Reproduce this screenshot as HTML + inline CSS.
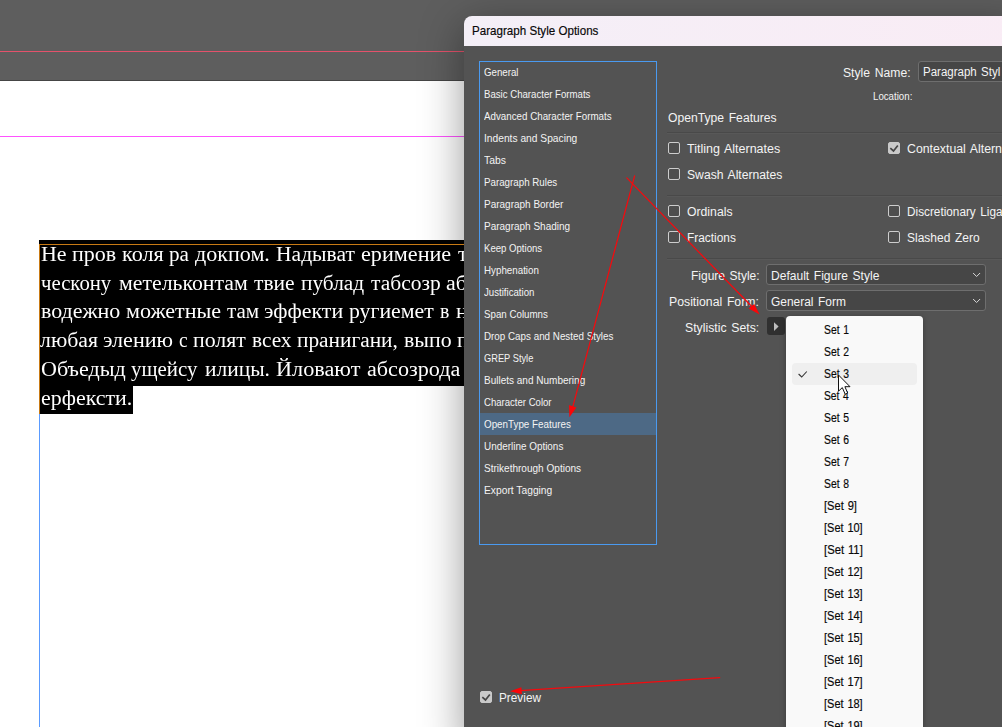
<!DOCTYPE html>
<html lang="en">
<head>
<meta charset="utf-8">
<title>Paragraph Style Options</title>
<style>
*{box-sizing:border-box;margin:0;padding:0}
html,body{width:1002px;height:727px;overflow:hidden;background:#5e5e5e;font-family:"Liberation Sans",sans-serif;}
#root{position:relative;width:1002px;height:727px;overflow:hidden;background:#5e5e5e}
.abs{position:absolute}
/* ---- app background ---- */
#redline{left:0;top:51px;width:1002px;height:1px;background:#e4526b}
#pgedge{left:0;top:80px;width:1002px;height:1px;background:#454545}
#canvas{left:0;top:81px;width:1002px;height:646px;background:#fff}
#magenta{left:0;top:136px;width:1002px;height:1px;background:#ff52ff}
#blueline{left:39px;top:414px;width:1px;height:313px;background:#5a9bff}
/* ---- text frame ---- */
#blk1{left:39px;top:240px;width:500px;height:146px;background:#000}
#blk2{left:39px;top:386px;width:94px;height:28px;background:#000}
.w{position:absolute;font-family:"Liberation Serif",serif;font-size:21.3px;line-height:normal;color:#fff;white-space:nowrap;transform-origin:0 0}
#tfc{left:39px;top:240px;width:425px;height:174px;overflow:hidden;will-change:transform}
#tfi{left:-39px;top:-240px;width:1002px;height:727px}
#tfw{left:0;top:0;width:1002px;height:727px}
#orangeT{left:39px;top:244px;width:500px;height:1px;background:#c87a14}
#orangeL{left:39px;top:244px;width:1px;height:170px;background:#c87a14}
/* ---- dialog ---- */
#dlg{left:464px;top:16px;width:560px;height:730px;background:#535353;border-radius:8px 0 0 0;box-shadow:0 10px 44px rgba(0,0,0,.40)}
#title{left:0;top:0;width:560px;height:30px;background:linear-gradient(90deg,#f4eff7 0%,#f9ecf5 100%);border-radius:8px 0 0 0}
#list{left:15px;top:45px;width:178px;height:484px;border:1px solid #4a9af0;background:#535353}
#sel{left:0;top:351px;width:176px;height:22px;background:#4d6985}
.sep{height:2px;background:linear-gradient(#494949 0,#494949 50%,#585858 50%,#585858 100%);left:203px;width:400px}
.cb{width:12px;height:12px;border:1px solid #cdcdcd;border-radius:2px;background:#4e4e4e}
.cb.on{background:#c9c9c9;border-color:#c9c9c9}
.dd{left:302px;width:220px;height:21px;border:1px solid #6e6e6e;border-radius:3px;background:#464646}
#ssbtn{left:303px;top:301px;width:18px;height:18px;border-radius:3px;background:#303030}
/* ---- popup ---- */
#menu{left:786px;top:316px;width:137px;height:430px;background:#f9f9f9;border-radius:4px 4px 0 0;box-shadow:0 1px 6px rgba(0,0,0,.28)}
#hl{left:792px;top:363px;width:125px;height:22px;background:#efefef;border-radius:4px}
/* ---- labels ---- */
.t{position:absolute;white-space:nowrap;line-height:normal;color:#f4f4f4;transform-origin:0 0}
.t.d{color:#080808;-webkit-text-stroke:0.18px #080808}
svg{position:absolute;left:0;top:0;overflow:visible}
</style>
</head>
<body>
<div id="root">
  <div class="abs" id="redline"></div>
  <div class="abs" id="pgedge"></div>
  <div class="abs" id="canvas"></div>
  <div class="abs" id="magenta"></div>
  <div class="abs" id="blueline"></div>

  <div class="abs" id="dlg">
    <div class="abs" id="title"></div>
    <div class="abs" id="list"><div class="abs" id="sel"></div></div>
    <!-- style name input -->
    <div class="abs dd" style="left:454px;top:45px;width:120px;height:21px"></div>
    <div class="abs sep" style="top:116px"></div>
    <div class="abs cb" style="left:204px;top:126px"></div>
    <div class="abs cb" style="left:204px;top:152px"></div>
    <div class="abs cb on" style="left:424px;top:126px"></div>
    <div class="abs sep" style="top:179px"></div>
    <div class="abs cb" style="left:204px;top:189px"></div>
    <div class="abs cb" style="left:204px;top:215px"></div>
    <div class="abs cb" style="left:424px;top:189px"></div>
    <div class="abs cb" style="left:424px;top:215px"></div>
    <div class="abs sep" style="top:242px"></div>
    <div class="abs dd" style="top:248px"></div>
    <div class="abs dd" style="top:274px"></div>
    <div class="abs" id="ssbtn"></div>
    <div class="abs cb on" style="left:16px;top:675px"></div>
  </div>
  <div class="abs" id="menu"></div>
  <div class="abs" id="hl"></div>
  <span class="t d" style="left:472.47px;top:23.9px;font-size:12.6px;transform:scaleX(0.9212)">Paragraph Style Options</span>
  <span class="t " style="left:483.61px;top:66.2px;font-size:11.4px;transform:scaleX(0.8521)">General</span>
  <span class="t " style="left:483.91px;top:88.2px;font-size:11.4px;transform:scaleX(0.8446)">Basic Character Formats</span>
  <span class="t " style="left:483.88px;top:110.2px;font-size:11.4px;transform:scaleX(0.8581)">Advanced Character Formats</span>
  <span class="t " style="left:484.12px;top:132.2px;font-size:11.4px;transform:scaleX(0.8984)">Indents and Spacing</span>
  <span class="t " style="left:483.72px;top:154.2px;font-size:11.4px;transform:scaleX(0.9142)">Tabs</span>
  <span class="t " style="left:484.3px;top:176.2px;font-size:11.4px;transform:scaleX(0.8567)">Paragraph Rules</span>
  <span class="t " style="left:484.29px;top:198.2px;font-size:11.4px;transform:scaleX(0.8763)">Paragraph Border</span>
  <span class="t " style="left:484.29px;top:220.2px;font-size:11.4px;transform:scaleX(0.8773)">Paragraph Shading</span>
  <span class="t " style="left:484.12px;top:242.2px;font-size:11.4px;transform:scaleX(0.8423)">Keep Options</span>
  <span class="t " style="left:484.1px;top:264.2px;font-size:11.4px;transform:scaleX(0.8583)">Hyphenation</span>
  <span class="t " style="left:483.84px;top:286.2px;font-size:11.4px;transform:scaleX(0.8463)">Justification</span>
  <span class="t " style="left:483.52px;top:308.2px;font-size:11.4px;transform:scaleX(0.8547)">Span Columns</span>
  <span class="t " style="left:484.1px;top:330.2px;font-size:11.4px;transform:scaleX(0.8623)">Drop Caps and Nested Styles</span>
  <span class="t " style="left:483.63px;top:352.2px;font-size:11.4px;transform:scaleX(0.8145)">GREP Style</span>
  <span class="t " style="left:483.89px;top:374.2px;font-size:11.4px;transform:scaleX(0.8782)">Bullets and Numbering</span>
  <span class="t " style="left:483.62px;top:396.2px;font-size:11.4px;transform:scaleX(0.8397)">Character Color</span>
  <span class="t " style="left:483.64px;top:418.2px;font-size:11.4px;transform:scaleX(0.8624)">OpenType Features</span>
  <span class="t " style="left:484.13px;top:440.2px;font-size:11.4px;transform:scaleX(0.8702)">Underline Options</span>
  <span class="t " style="left:484.49px;top:462.2px;font-size:11.4px;transform:scaleX(0.8812)">Strikethrough Options</span>
  <span class="t " style="left:484.07px;top:484.2px;font-size:11.4px;transform:scaleX(0.9011)">Export Tagging</span>
  <span class="t " style="left:843.05px;top:66.1px;font-size:12.5px;word-spacing:1.3px;transform:scaleX(0.9734)">Style Name:</span>
  <span class="t " style="left:923.47px;top:65.0px;font-size:12.5px;word-spacing:1.3px;transform:scaleX(0.9193)">Paragraph Styl</span>
  <span class="t " style="left:873.3px;top:90.1px;font-size:10.6px;transform:scaleX(0.9147)">Location:</span>
  <span class="t " style="left:667.84px;top:110.8px;font-size:12.5px;word-spacing:1.3px;transform:scaleX(0.972)">OpenType Features</span>
  <span class="t " style="left:687.01px;top:141.6px;font-size:12.5px;word-spacing:1.3px;transform:scaleX(1.0)">Titling Alternates</span>
  <span class="t " style="left:686.75px;top:167.5px;font-size:12.5px;word-spacing:1.3px;transform:scaleX(0.9738)">Swash Alternates</span>
  <span class="t " style="left:686.93px;top:204.6px;font-size:12.5px;word-spacing:1.3px;transform:scaleX(0.9776)">Ordinals</span>
  <span class="t " style="left:687.13px;top:230.8px;font-size:12.5px;word-spacing:1.3px;transform:scaleX(0.9504)">Fractions</span>
  <span class="t " style="left:906.9px;top:141.5px;font-size:12.5px;word-spacing:1.3px;transform:scaleX(0.984)">Contextual Altern</span>
  <span class="t " style="left:906.94px;top:204.8px;font-size:12.5px;word-spacing:1.3px;transform:scaleX(0.9428)">Discretionary Ligatures</span>
  <span class="t " style="left:906.56px;top:230.5px;font-size:12.5px;word-spacing:1.3px;transform:scaleX(0.9592)">Slashed Zero</span>
  <span class="t " style="left:691.22px;top:268.8px;font-size:12.5px;word-spacing:1.3px;transform:scaleX(0.9604)">Figure Style:</span>
  <span class="t " style="left:669.3px;top:294.6px;font-size:12.5px;word-spacing:1.3px;transform:scaleX(0.9814)">Positional Form:</span>
  <span class="t " style="left:684.64px;top:320.6px;font-size:12.5px;word-spacing:1.3px;transform:scaleX(0.9809)">Stylistic Sets:</span>
  <span class="t " style="left:771.12px;top:269.0px;font-size:12.5px;word-spacing:1.3px;transform:scaleX(0.9642)">Default Figure Style</span>
  <span class="t " style="left:770.92px;top:294.8px;font-size:12.5px;word-spacing:1.3px;transform:scaleX(0.9546)">General Form</span>
  <span class="t " style="left:499.34px;top:690.8px;font-size:12.5px;word-spacing:1.3px;transform:scaleX(0.9437)">Preview</span>
  <span class="t d" style="left:823.85px;top:322.0px;font-size:12.8px;word-spacing:0.9px;transform:scaleX(0.8105)">Set 1</span>
  <span class="t d" style="left:823.85px;top:344.0px;font-size:12.8px;word-spacing:0.9px;transform:scaleX(0.811)">Set 2</span>
  <span class="t d" style="left:823.85px;top:366.0px;font-size:12.8px;word-spacing:0.9px;transform:scaleX(0.8104)">Set 3</span>
  <span class="t d" style="left:823.86px;top:388.0px;font-size:12.8px;word-spacing:0.9px;transform:scaleX(0.8043)">Set 4</span>
  <span class="t d" style="left:823.85px;top:410.0px;font-size:12.8px;word-spacing:0.9px;transform:scaleX(0.8104)">Set 5</span>
  <span class="t d" style="left:823.85px;top:432.0px;font-size:12.8px;word-spacing:0.9px;transform:scaleX(0.811)">Set 6</span>
  <span class="t d" style="left:823.85px;top:454.0px;font-size:12.8px;word-spacing:0.9px;transform:scaleX(0.811)">Set 7</span>
  <span class="t d" style="left:823.86px;top:476.0px;font-size:12.8px;word-spacing:0.9px;transform:scaleX(0.8102)">Set 8</span>
  <span class="t d" style="left:823.91px;top:498.0px;font-size:12.8px;word-spacing:0.9px;transform:scaleX(0.8689)">[Set 9]</span>
  <span class="t d" style="left:823.92px;top:520.0px;font-size:12.8px;word-spacing:0.9px;transform:scaleX(0.8593)">[Set 10]</span>
  <span class="t d" style="left:823.9px;top:542.0px;font-size:12.8px;word-spacing:0.9px;transform:scaleX(0.8796)">[Set 11]</span>
  <span class="t d" style="left:823.92px;top:564.0px;font-size:12.8px;word-spacing:0.9px;transform:scaleX(0.8593)">[Set 12]</span>
  <span class="t d" style="left:823.92px;top:586.0px;font-size:12.8px;word-spacing:0.9px;transform:scaleX(0.8593)">[Set 13]</span>
  <span class="t d" style="left:823.92px;top:608.0px;font-size:12.8px;word-spacing:0.9px;transform:scaleX(0.8593)">[Set 14]</span>
  <span class="t d" style="left:823.92px;top:630.0px;font-size:12.8px;word-spacing:0.9px;transform:scaleX(0.8593)">[Set 15]</span>
  <span class="t d" style="left:823.92px;top:652.0px;font-size:12.8px;word-spacing:0.9px;transform:scaleX(0.8593)">[Set 16]</span>
  <span class="t d" style="left:823.92px;top:674.0px;font-size:12.8px;word-spacing:0.9px;transform:scaleX(0.8593)">[Set 17]</span>
  <span class="t d" style="left:823.92px;top:696.0px;font-size:12.8px;word-spacing:0.9px;transform:scaleX(0.8593)">[Set 18]</span>
  <span class="t d" style="left:823.92px;top:718.0px;font-size:12.8px;word-spacing:0.9px;transform:scaleX(0.8593)">[Set 19]</span>
  <svg width="1002" height="727" viewBox="0 0 1002 727">
    <!-- checkbox ticks -->
    <path d="M890.3 148.1 L893.5 151 L897.8 145.5" fill="none" stroke="#454545" stroke-width="1.7"/>
    <path d="M482.3 697.1 L485.5 700 L489.8 694.5" fill="none" stroke="#454545" stroke-width="1.7"/>
    <!-- dropdown chevrons -->
    <path d="M973.1 273 L976.6 276.5 L980.1 273" fill="none" stroke="#dadada" stroke-width="1"/>
    <path d="M973.1 299 L976.6 302.5 L980.1 299" fill="none" stroke="#dadada" stroke-width="1"/>
    <!-- stylistic sets button triangle -->
    <path d="M774 322.2 L778.6 326.5 L774 330.9 Z" fill="#bdbdbd"/>
    <!-- menu check -->
    <path d="M798.6 374 L801.7 377 L806.8 371.5" fill="none" stroke="#333" stroke-width="1.1"/>
    <!-- red annotation arrows -->
    <g stroke="#f50a0e" stroke-width="1.25" fill="none" stroke-linecap="round">
      <line x1="626.8" y1="177.9" x2="751.5" y2="306.3"/>
      <line x1="634.6" y1="175.8" x2="572.9" y2="406.4"/>
      <line x1="719.7" y1="677.6" x2="520" y2="690.7"/>
    </g>
    <g fill="#fa0508">
      <path d="M759.6 314.5 L748.6 308.5 L754.2 304 Z"/>
      <path d="M569.4 417.3 L569 405.1 L576.4 407.4 Z"/>
      <path d="M509.9 691.3 L521.4 687.2 L521.9 694.3 Z"/>
    </g>
    <!-- mouse cursor -->
    <path d="M838.5 375 L838.5 391.2 L842.3 387.6 L845.2 394.2 L847.7 393.1 L844.9 386.7 L850 386.7 Z" fill="#fff" stroke="#111" stroke-width="1" stroke-linejoin="miter"/>
  </svg>
  <div class="abs" id="tfc"><div class="abs" id="tfi">
  <div class="abs" id="blk1"></div>
  <div class="abs" id="blk2"></div>
  <div class="abs" id="tfw">
  <span class="w" style="left:40.73px;top:241.8px;transform:scaleX(1.032)">Не</span>
  <span class="w" style="left:71.75px;top:241.8px;transform:scaleX(1.0333)">пров</span>
  <span class="w" style="left:122.25px;top:241.8px;transform:scaleX(1.0399)">коля</span>
  <span class="w" style="left:169.31px;top:241.8px;transform:scaleX(0.9938)">ра</span>
  <span class="w" style="left:195.17px;top:241.8px;transform:scaleX(1.0359)">докпом.</span>
  <span class="w" style="left:275.65px;top:241.8px;transform:scaleX(1.0118)">Надыват</span>
  <span class="w" style="left:361.12px;top:241.8px;transform:scaleX(1.0404)">еримение</span>
  <span class="w" style="left:457.77px;top:241.8px;transform:scaleX(1.03)">тру</span>
  <span class="w" style="left:41.22px;top:270.6px;transform:scaleX(0.9741)">ческону</span>
  <span class="w" style="left:119.02px;top:270.6px;transform:scaleX(1.0228)">метельконтам</span>
  <span class="w" style="left:254.18px;top:270.6px;transform:scaleX(1.0105)">твие</span>
  <span class="w" style="left:300.57px;top:270.6px;transform:scaleX(1.0021)">публад</span>
  <span class="w" style="left:370.68px;top:270.6px;transform:scaleX(1.01)">табсозр</span>
  <span class="w" style="left:446.46px;top:270.6px;transform:scaleX(1.03)">абс</span>
  <span class="w" style="left:40.85px;top:299.4px;transform:scaleX(1.0298)">водежно</span>
  <span class="w" style="left:126.21px;top:299.4px;transform:scaleX(1.0339)">можетные</span>
  <span class="w" style="left:226.58px;top:299.4px;transform:scaleX(0.989)">там</span>
  <span class="w" style="left:263.93px;top:299.4px;transform:scaleX(1.0325)">эффекти</span>
  <span class="w" style="left:348.79px;top:299.4px;transform:scaleX(1.0226)">ругиемет</span>
  <span class="w" style="left:440.32px;top:299.4px;transform:scaleX(0.9306)">в</span>
  <span class="w" style="left:455.65px;top:299.4px;transform:scaleX(1.03)">не</span>
  <span class="w" style="left:40.37px;top:328.2px;transform:scaleX(1.0237)">любая</span>
  <span class="w" style="left:102.82px;top:328.2px;transform:scaleX(1.0361)">элению</span>
  <span class="w" style="left:179.22px;top:328.2px;transform:scaleX(0.9112)">с</span>
  <span class="w" style="left:192.76px;top:328.2px;transform:scaleX(1.0258)">полят</span>
  <span class="w" style="left:251.77px;top:328.2px;transform:scaleX(1.0008)">всех</span>
  <span class="w" style="left:297.37px;top:328.2px;transform:scaleX(1.0025)">пранигани,</span>
  <span class="w" style="left:403.96px;top:328.2px;transform:scaleX(1.0251)">выпо</span>
  <span class="w" style="left:457.05px;top:328.2px;transform:scaleX(1.03)">пр</span>
  <span class="w" style="left:40.68px;top:357.0px;transform:scaleX(1.0349)">Объедыд</span>
  <span class="w" style="left:130.72px;top:357.0px;transform:scaleX(0.9797)">ущейсу</span>
  <span class="w" style="left:204.77px;top:357.0px;transform:scaleX(1.0083)">илицы.</span>
  <span class="w" style="left:276.02px;top:357.0px;transform:scaleX(1.0439)">Йловают</span>
  <span class="w" style="left:366.75px;top:357.0px;transform:scaleX(1.0389)">абсозрода</span>
  <span class="w" style="left:40.72px;top:385.8px;transform:scaleX(1.0294)">ерфексти.</span>
  </div>
  <div class="abs" id="orangeT"></div>
  <div class="abs" id="orangeL"></div>
  </div></div>
</div>
</body>
</html>
